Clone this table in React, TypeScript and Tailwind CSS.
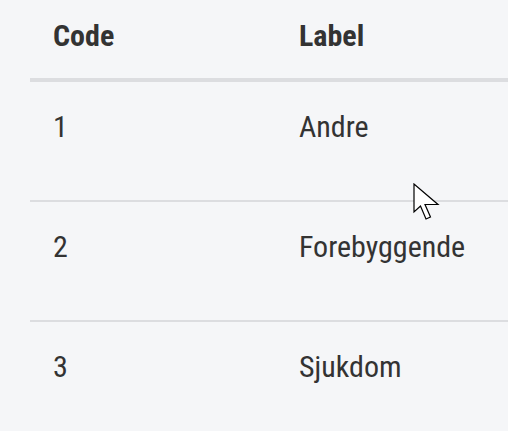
import React from 'react';

const rows = [
    { code: '1', label: 'Andre' },
    { code: '2', label: 'Forebyggende' },
    { code: '3', label: 'Sjukdom' },
];

const Cursor: React.FC = () => (
    <svg className="absolute left-[413px] top-[183px]" width="28" height="40" viewBox="0 0 28 40">
        <path
            d="M1 1 L1 29 L7.5 23 L13 36 L17.5 34 L12 21.5 L25 21.5 Z"
            fill="white"
            stroke="black"
            strokeWidth="1.2"
            strokeLinejoin="miter"
        />
    </svg>
);

const App: React.FC = () => {
    return (
        <div className="relative w-[508px] h-[431px] overflow-hidden bg-[#f5f6f8] font-['Roboto_Condensed',Roboto,'Liberation_Sans',sans-serif] [font-stretch:condensed] text-[#333333]">
            <div className="pl-[30px] w-[560px]">
                <div className="flex border-b-4 border-[#dcdde0] pt-[18px] pb-[24px]">
                    <div className="w-[246px] pl-[23px] text-[30px] leading-[36px] font-bold">Code</div>
                    <div className="pl-[23px] text-[30px] leading-[36px] font-bold">Label</div>
                </div>
                {rows.map((r) => (
                    <div key={r.code} className="flex h-[120px] border-b-2 border-[#dcdde0] pt-[27px]">
                        <div className="w-[246px] pl-[23px] text-[30px] leading-[36px]">{r.code}</div>
                        <div className="pl-[23px] text-[30px] leading-[36px]">{r.label}</div>
                    </div>
                ))}
            </div>
            <Cursor />
        </div>
    );
};

export default App;
